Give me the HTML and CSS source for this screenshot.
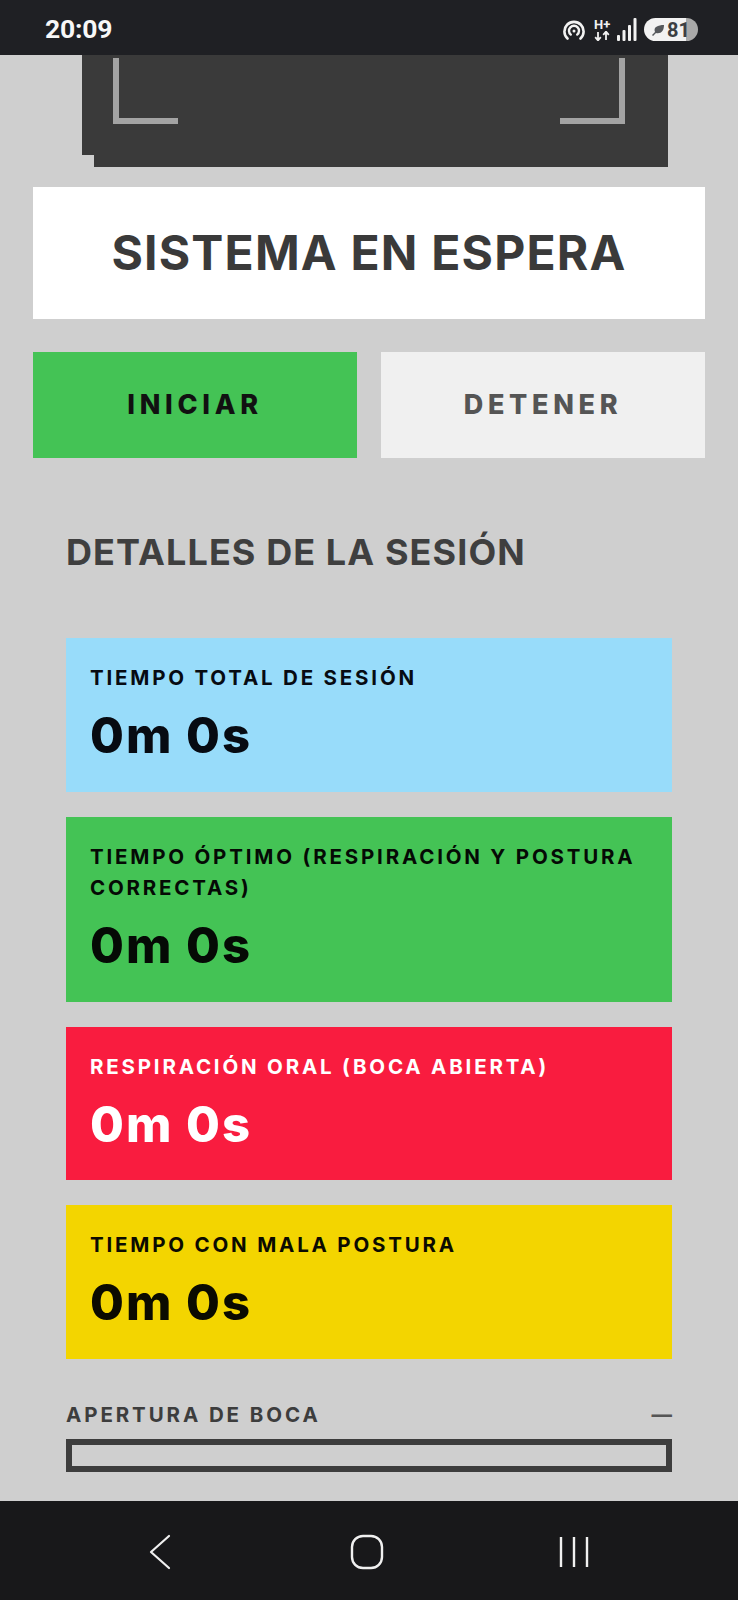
FILE: index.html
```html
<!DOCTYPE html>
<html lang="es">
<head>
<meta charset="utf-8">
<title>Sistema en espera</title>
<link rel="stylesheet" href="styles.css">
</head>
<body>
<div class="page">
  <header class="status">
    <span class="clock">20:09</span>
    <div class="status-icons">
      <svg class="ic-hotspot" width="24" height="20" viewBox="0 0 24 20" fill="none" stroke="#f2f2f2" stroke-linecap="round">
        <path d="M5.5 18.5A9.6 9.6 0 1 1 18.5 18.5" stroke-width="2.6"/>
        <path d="M8.8 14.6A5 5 0 1 1 15.2 14.6" stroke-width="2.4"/>
        <circle cx="12" cy="11" r="1.5" fill="#f2f2f2" stroke="none"/>
      </svg>
      <div class="net">
        <span class="net-text">H+</span>
        <svg width="17" height="10" viewBox="0 0 17 10"><path d="M4 1v8M1.2 6.2 4 9.4l2.8-3.2M12 9V1M9.2 3.8 12 .6l2.8 3.2" fill="none" stroke="#f2f2f2" stroke-width="1.8"/></svg>
      </div>
      <svg class="ic-signal" width="20" height="23" viewBox="0 0 20 23" fill="#f2f2f2">
        <rect x="0" y="17" width="3" height="6" rx="1"/>
        <rect x="5.5" y="12" width="3" height="11" rx="1"/>
        <rect x="11" y="7" width="3" height="16" rx="1"/>
        <rect x="16.5" y="0" width="3" height="23" rx="1"/>
      </svg>
      <div class="battery">
        <svg width="14" height="12" viewBox="0 0 14 12"><path d="M1 11 4 8C2 3 7 1 13 1 13 7 10 10 5 9L2 12Z" fill="#55585c"/></svg>
        <span>81</span>
      </div>
    </div>
  </header>

  <section class="camera">
    <div class="camera-main">
      <i class="corner corner-left"></i>
      <i class="corner corner-right"></i>
    </div>
    <div class="camera-lip"></div>
  </section>

  <div class="title-card"><h1>SISTEMA EN ESPERA</h1></div>

  <div class="actions">
    <button class="btn btn-start">INICIAR</button>
    <button class="btn btn-stop">DETENER</button>
  </div>

  <main class="details">
    <h2>DETALLES DE LA SESIÓN</h2>
    <div class="stats">
      <div class="stat stat-blue">
        <div class="stat-label">TIEMPO TOTAL DE SESIÓN</div>
        <div class="stat-value">0m 0s</div>
      </div>
      <div class="stat stat-green">
        <div class="stat-label">TIEMPO ÓPTIMO (RESPIRACIÓN Y POSTURA CORRECTAS)</div>
        <div class="stat-value">0m 0s</div>
      </div>
      <div class="stat stat-red">
        <div class="stat-label">RESPIRACIÓN ORAL (BOCA ABIERTA)</div>
        <div class="stat-value">0m 0s</div>
      </div>
      <div class="stat stat-yellow">
        <div class="stat-label">TIEMPO CON MALA POSTURA</div>
        <div class="stat-value">0m 0s</div>
      </div>
    </div>
    <div class="meter-head">
      <span>APERTURA DE BOCA</span>
      <span class="meter-value">—</span>
    </div>
    <div class="meter"></div>
  </main>

  <nav class="navbar">
    <svg width="36" height="36" viewBox="0 0 36 36" fill="none" stroke="#f0f0f0" stroke-width="2.2" stroke-linecap="round" stroke-linejoin="round"><path d="M27 2 9 18l18 16"/></svg>
    <svg width="36" height="36" viewBox="0 0 36 36" fill="none" stroke="#f0f0f0" stroke-width="2.4"><rect x="3" y="2" width="30" height="32" rx="11"/></svg>
    <svg width="36" height="36" viewBox="0 0 36 36" fill="none" stroke="#f0f0f0" stroke-width="2.4"><path d="M5 3v30M18 3v30M31 3v30"/></svg>
  </nav>
</div>
</body>
</html>
```

FILE: styles.css
```css
* { box-sizing: border-box; }
html, body { margin: 0; padding: 0; }
body { background: #cfcfcf; font-family: Inter, "Liberation Sans", sans-serif; }
.page { width: 738px; height: 1600px; display: flex; flex-direction: column; overflow: hidden; background: #cfcfcf; }

.status { height: 55px; flex: none; background: #1f2024; display: flex; align-items: center; justify-content: space-between; padding: 4px 40px 0 45px; }
.clock { margin-bottom: 3px; font-family: Roboto, sans-serif; font-weight: 700; font-size: 26.5px; color: #f7f7f7; letter-spacing: -.2px; }
.status-icons { display: flex; align-items: center; }
.ic-hotspot { margin-right: 8px; }
.net { width: 18px; margin-right: 5px; display: flex; flex-direction: column; }
.net-text { height: 12px; font-family: Roboto, sans-serif; font-weight: 700; font-size: 13px; line-height: 12px; color: #f2f2f2; white-space: nowrap; }
.ic-signal { margin-right: 7px; }
.battery { width: 54px; height: 23px; border-radius: 12px; background: linear-gradient(90deg, #f2f2f2 0, #f2f2f2 78%, #a9a9a9 78%); display: flex; align-items: center; gap: 2px; padding-left: 7px; color: #3c3f43; font-family: Roboto, sans-serif; font-weight: 700; font-size: 20px; }

.camera { margin-left: 82px; width: 586px; flex: none; display: flex; flex-direction: column; align-items: flex-end; }
.camera-main { position: relative; width: 100%; height: 100px; background: #3a3a3a; }
.camera-lip { width: 574px; height: 12px; background: #3a3a3a; }
.corner { position: absolute; top: 3px; width: 65px; height: 66px; border-bottom: 6px solid #a3a3a3; }
.corner-left { left: 31px; border-left: 6px solid #a3a3a3; }
.corner-right { right: 43px; border-right: 6px solid #a3a3a3; }

.title-card { margin: 20px 33px 0; height: 131.5px; flex: none; background: #fff; display: flex; align-items: center; justify-content: center; }
h1 { margin: 0; font-size: 48px; font-weight: 700; color: #3a3a3a; letter-spacing: 1.2px; white-space: nowrap; }

.actions { margin: 33px 33px 0; display: flex; gap: 24px; flex: none; }
.btn { flex: 1; height: 106.5px; border: 0; border-radius: 0; font-family: inherit; font-size: 27px; font-weight: 800; letter-spacing: 4.7px; }
.btn-start { background: #44c355; color: #111; }
.btn-stop { background: #f0f0f0; color: #555; }

.details { padding: 0 66px; flex: 1; }
h2 { margin: 0; padding-top: 73px; height: 180px; font-size: 36px; line-height: 43px; font-weight: 700; color: #3f3f3f; letter-spacing: 1.1px; white-space: nowrap; }
.stats { display: flex; flex-direction: column; gap: 25px; }
.stat { padding: 24px 24px 0; min-height: 153.5px; }
.stat-label { font-size: 20.5px; line-height: 31px; font-weight: 700; letter-spacing: 2.8px; }
.stat-value { margin-top: 14px; font-size: 49px; line-height: 58px; font-weight: 800; letter-spacing: 2px; }
.stat-blue { background: #98dcfa; color: #070b12; }
.stat-green { background: #44c355; color: #050a05; height: 185px; }
.stat-red { background: #f91c3f; color: #fff; }
.stat-yellow { background: #f3d500; color: #0b0b00; }

.meter-head { margin-top: 42.5px; display: flex; justify-content: space-between; align-items: center; font-size: 20.5px; line-height: 28px; font-weight: 700; letter-spacing: 2.9px; color: #3d3d3d; }
.meter-value { letter-spacing: 0; color: #555; }
.meter { margin-top: 10px; height: 33px; border: 6px solid #3d3d3d; }

.navbar { height: 99px; flex: none; background: #18181a; display: flex; align-items: center; justify-content: center; gap: 171px; padding: 3px 4px 0 0; }
```
